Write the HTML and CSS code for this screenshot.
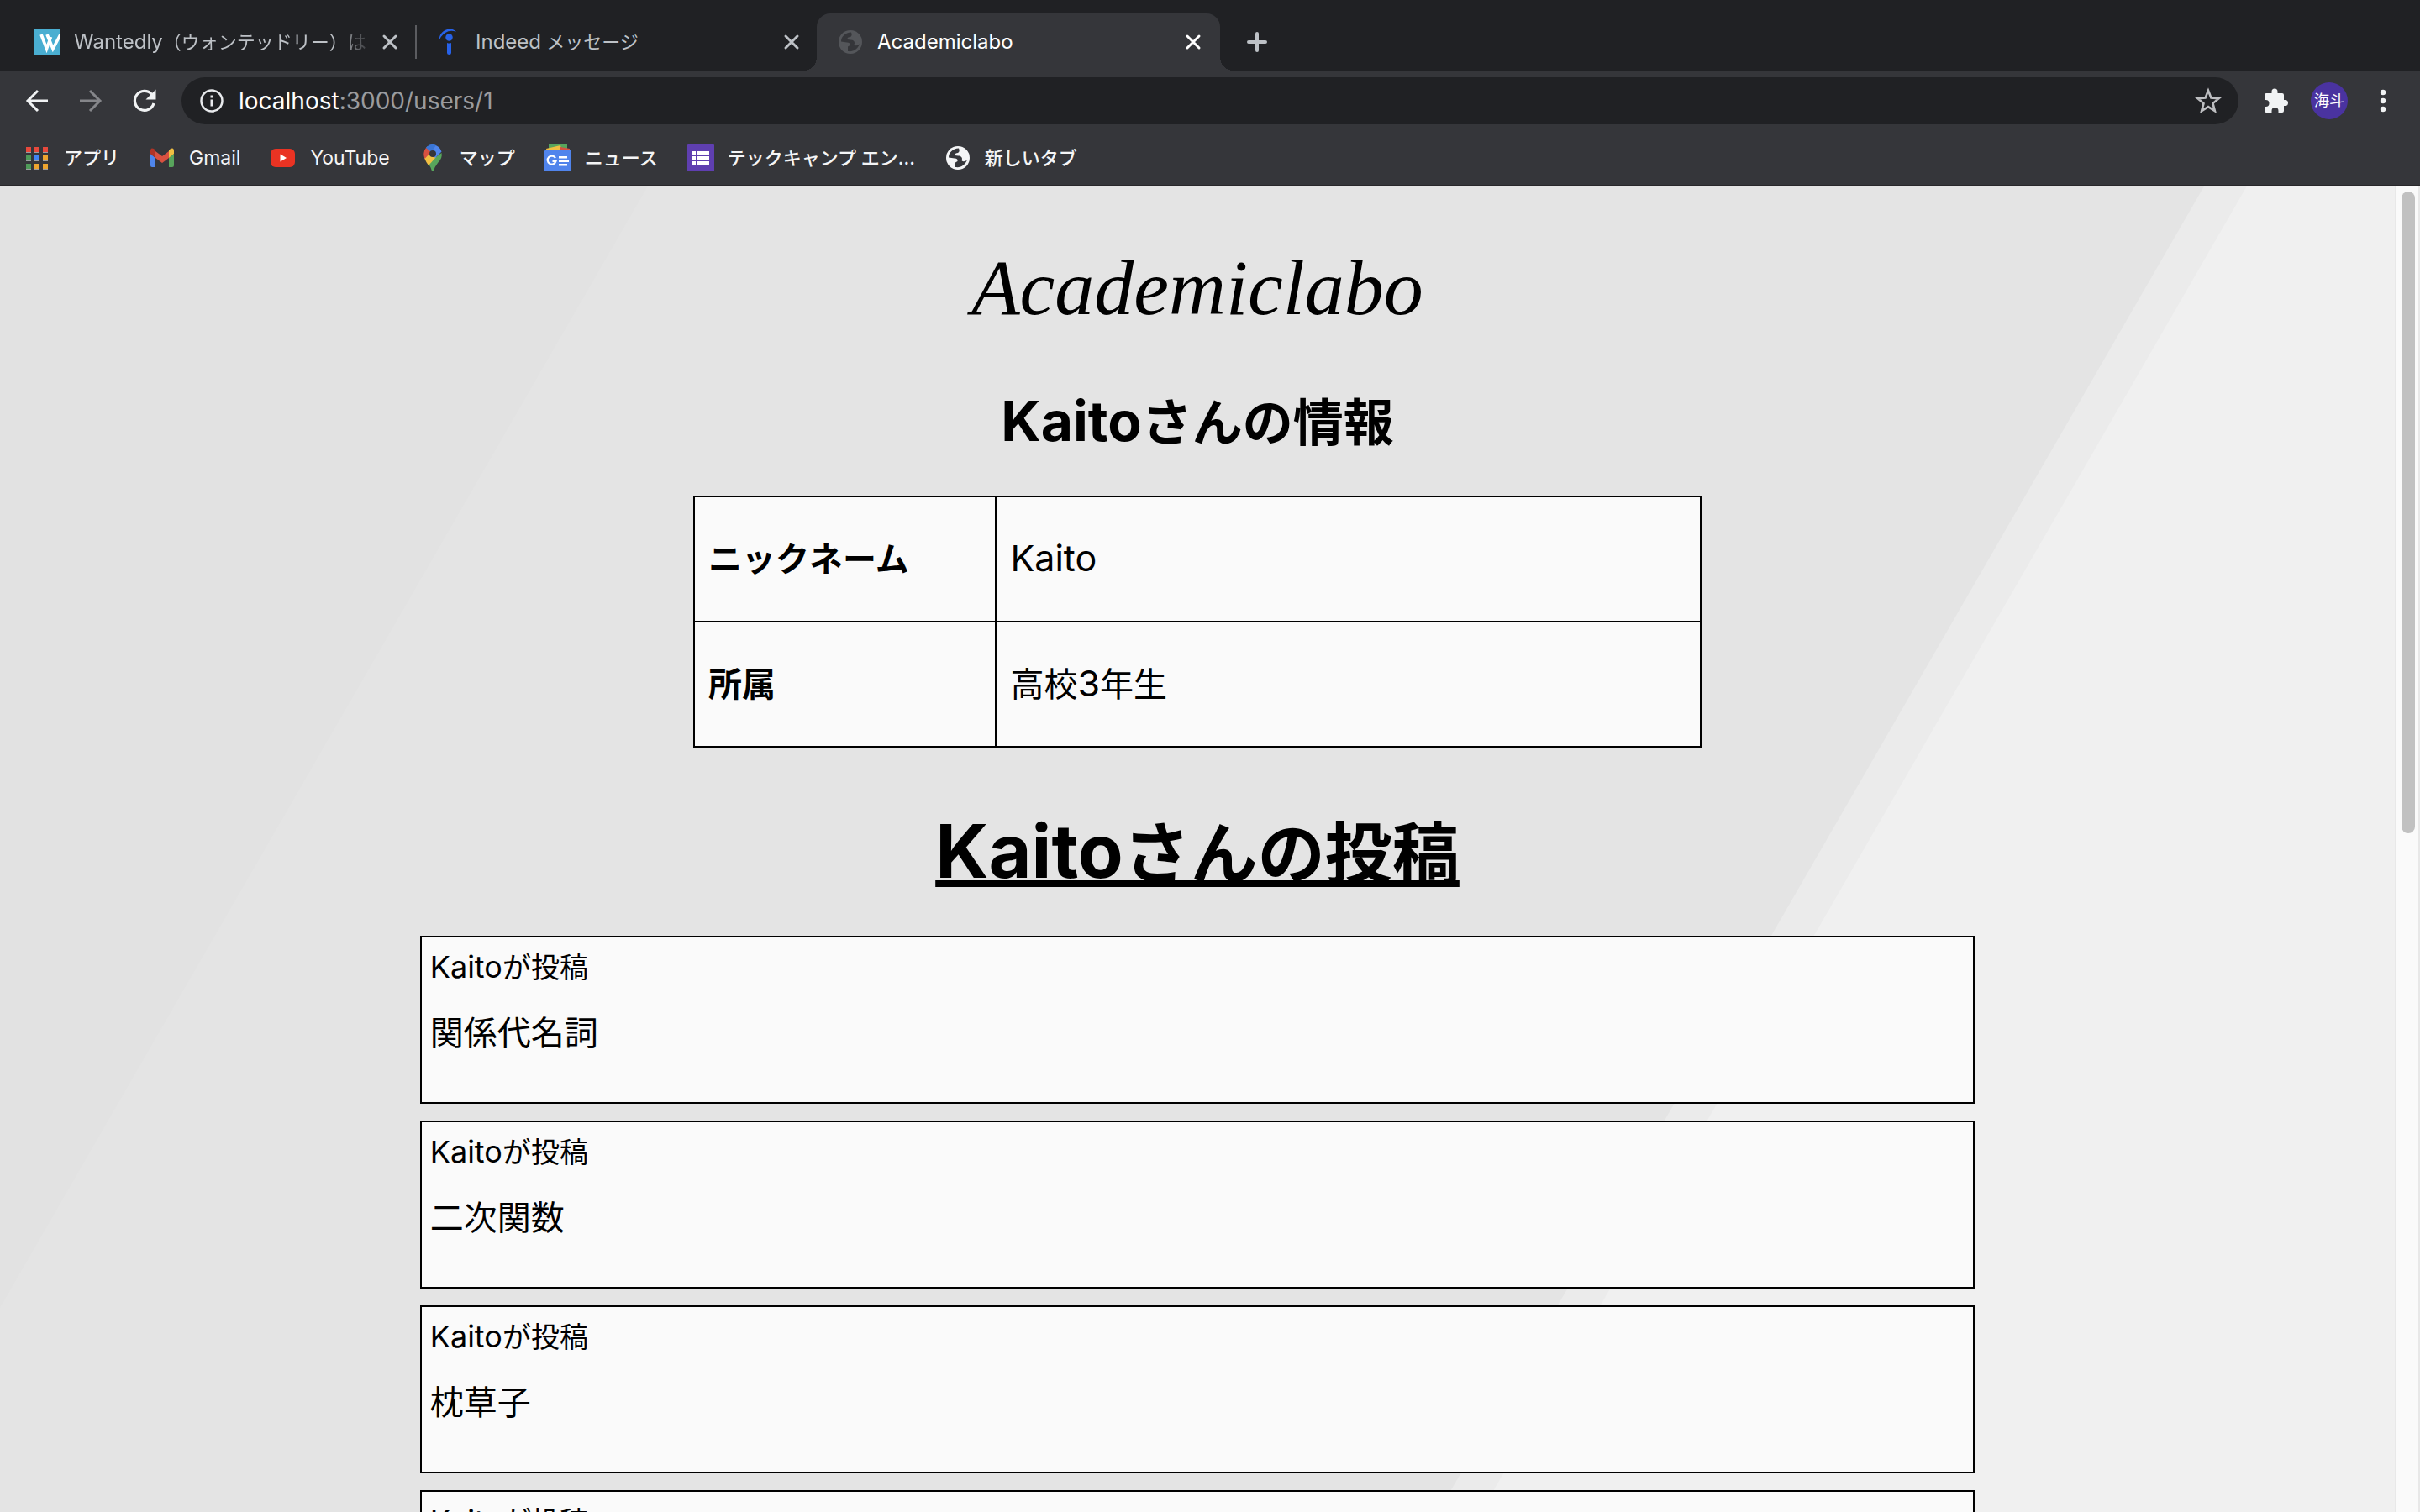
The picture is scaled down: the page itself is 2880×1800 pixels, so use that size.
FILE: index.html
```html
<!DOCTYPE html>
<html lang="ja">
<head>
<meta charset="utf-8">
<title>Academiclabo</title>
<link rel="stylesheet" href="styles.css">
</head>
<body>
<svg class="defs" aria-hidden="true">
  <symbol id="close" viewBox="0 0 32 32"><path d="M9 9l14 14M23 9L9 23" fill="none" stroke="currentColor" stroke-width="3" stroke-linecap="round"/></symbol>
  <symbol id="globe" viewBox="0 0 32 32"><circle cx="16" cy="16" r="14" fill="currentColor"/><path class="land" d="M17 4.500C10 5 5 9.500 5 15.500L12 16.500C15 16.500 16 18 15.500 20L13 21.500V27C20 28 25 24 27 18C25 20.500 22 21 20.500 19C22 16 20 13.500 16.500 13.500L12.500 13C12 11 14 10 16 10C18 9 18 7 17 4.500Z"/></symbol>
</svg>

<header class="chrome">
  <nav class="tabs" aria-label="タブ">
    <div class="tab">
      <svg class="icon" viewBox="0 0 32 32"><path fill="#4aaed1" d="M0 0h32v32H0z"/><path d="M9 7l6.500 17 5-14M16 7l7 17L32 7" fill="none" stroke="#fff" stroke-width="3.600"/></svg>
      <span class="tab-title"><span class="latin">Wantedly</span>（ウォンテッドリー）は</span>
      <button class="tab-close" aria-label="閉じる"><svg class="icon"><use href="#close"/></svg></button>
    </div>
    <div class="tab divided">
      <svg class="icon" viewBox="0 0 32 32"><circle cx="16.500" cy="10.500" r="4.200" fill="#2762e9"/><path d="M14 17q2.500 1 5 0v12q0 2-2.500 2t-2.500-2z" fill="#2762e9"/><path d="M4 16Q5 1 18 .5Q22 .5 25 4Q18 1 12 5Q6 9 4 16z" fill="#2762e9"/></svg>
      <span class="tab-title"><span class="latin">Indeed</span> メッセージ</span>
      <button class="tab-close" aria-label="閉じる"><svg class="icon"><use href="#close"/></svg></button>
    </div>
    <div class="tab active">
      <svg class="icon dim"><use href="#globe"/></svg>
      <span class="tab-title"><span class="latin">Academiclabo</span></span>
      <button class="tab-close" aria-label="閉じる"><svg class="icon"><use href="#close"/></svg></button>
    </div>
    <button class="new-tab" aria-label="新しいタブ"><svg class="icon" viewBox="0 0 32 32"><path d="M16 6v20M6 16h20" stroke="currentColor" stroke-width="4" stroke-linecap="round"/></svg></button>
  </nav>

  <div class="toolbar">
    <button class="tool" aria-label="戻る"><svg viewBox="0 0 40 40"><path d="M33 20H9M21 8L9 20l12 12" fill="none" stroke="#f1f3f4" stroke-width="3"/></svg></button>
    <button class="tool" aria-label="進む"><svg viewBox="0 0 40 40"><path d="M7 20h24M19 8l12 12-12 12" fill="none" stroke="#85868a" stroke-width="3"/></svg></button>
    <button class="tool" aria-label="再読み込み"><svg viewBox="0 0 40 40"><path d="M31 23A11.500 11.500 0 1 1 28.500 12.200" fill="none" stroke="#f1f3f4" stroke-width="3.200"/><path d="M33.500 6.500v12h-12z" fill="#f1f3f4"/></svg></button>
    <div class="omnibox">
      <svg class="icon" viewBox="0 0 32 32"><circle cx="16" cy="16" r="12.500" fill="none" stroke="#e8eaed" stroke-width="2.500"/><path d="M14.500 14.500h3v8h-3zM14.500 9.500h3v3h-3z" fill="#e8eaed"/></svg>
      <div class="url">localhost<span class="path">:3000/users/1</span></div>
      <button class="star" aria-label="ブックマーク"><svg class="icon" viewBox="0 0 32 32"><path d="M16 3.800l3.400 8.700 9.300.6-7.200 6 2.400 9-7.900-5-7.900 5 2.400-9-7.200-6 9.300-.6z" fill="none" stroke="#bdbec1" stroke-width="2.600"/></svg></button>
    </div>
    <button class="tool" aria-label="拡張機能"><svg viewBox="0 0 40 40"><path d="M9 11h6.500V9a3.500 3.500 0 0 1 7 0v2H28a2 2 0 0 1 2 2v6h1.500a3.500 3.500 0 0 1 0 7H30v6a2 2 0 0 1-2 2h-4.500v-2a4 4 0 0 0-8 0v2H9a2 2 0 0 1-2-2v-5h1.500a4 4 0 0 0 0-8H7v-6a2 2 0 0 1 2-2z" fill="#f1f3f4"/></svg></button>
    <button class="avatar" aria-label="プロフィール">海斗</button>
    <button class="tool" aria-label="メニュー"><svg viewBox="0 0 40 40" fill="#f1f3f4"><circle cx="20" cy="10" r="3.200"/><circle cx="20" cy="20" r="3.200"/><circle cx="20" cy="30" r="3.200"/></svg></button>
  </div>

  <nav class="bookmarks" aria-label="ブックマーク">
    <a href="#"><svg class="icon" viewBox="0 0 32 32"><path fill="#e8493c" d="M3 3h6v6H3zM13 3h6v6h-6zM23 3h6v6h-6z"/><path fill="#4f9a59" d="M3 13h6v6H3zM3 23h6v6H3z"/><path fill="#4285f4" d="M13 13h6v6h-6z"/><path fill="#eda52f" d="M23 13h6v6h-6zM13 23h6v6h-6zM23 23h6v6h-6z"/><path fill="#9b9da0" d="M3 9h6v1H3zM13 9h6v1h-6zM23 9h6v1h-6zM3 19h6v1H3zM13 19h6v1h-6zM23 19h6v1h-6zM3 29h6v1H3zM13 29h6v1h-6zM23 29h6v1h-6z"/></svg>アプリ</a>
    <a href="#"><svg class="icon" viewBox="0 0 32 32"><path fill="#4f86ec" d="M2 11l6 5v11H4q-2 0-2-2z"/><path fill="#58a55c" d="M24 16l6-5v14q0 2-2 2h-4z"/><path fill="#d85140" d="M8 8l8 6 8-6v8l-8 6-8-6z"/><path fill="#b13426" d="M2 8q0-5 4-3l2 2v9l-6-5z"/><path fill="#f1bf42" d="M30 8q0-5-4-3l-2 2v9l6-5z"/></svg><span class="latin">Gmail</span></a>
    <a href="#"><svg class="icon" viewBox="0 0 32 32"><rect x="1" y="5" width="29" height="22" rx="6" fill="#ea3323"/><path d="M12.500 11.500l7.500 4.500-7.500 4.500z" fill="#fff"/></svg><span class="latin">YouTube</span></a>
    <a href="#"><svg class="icon" viewBox="0 0 32 32"><path fill="#58a55c" d="M26.500 10Q28 16 22 22Q18 27 17 31.500H15Q14 27 10 22z"/><path fill="#f1bf42" d="M6 16L12.500 9.500 20 15 11 25Q8 21 6 16z"/><path fill="#4f86ec" d="M8 4Q11 0 16 0Q24 1 26.500 8.500L19 16z"/><path fill="#3a76d6" d="M8 4Q13-2 20 1L14 9z"/><path fill="#d85140" d="M8 4l6 5-7.500 8Q3.500 9 8 4z"/><circle cx="16" cy="11" r="4" fill="#35363a"/></svg>マップ</a>
    <a href="#"><svg class="icon" viewBox="0 0 32 32"><path fill="#58a55c" d="M5 0h22v8H5z"/><path fill="#f1bf42" d="M2 5l17-4 2 8H3z"/><path fill="#d85140" d="M19 3l11 2v4H19z"/><rect y="7" width="32" height="25" rx="1" fill="#5084ec"/><path d="M13 16A5 5 0 1 0 13.500 20H9.500" fill="none" stroke="#fff" stroke-width="2.200"/><path d="M17 14h10v2.500H17zM17 18.500h12V21H17zM17 23h10v2.500H17z" fill="#fff"/></svg>ニュース</a>
    <a href="#"><svg class="icon" viewBox="0 0 32 32"><rect width="32" height="32" rx="1" fill="#5f3fb0"/><path fill="#fff" d="M6 8h4v4H6zM12 8h14v4H12zM6 14h4v4H6zM12 14h14v4H12zM6 20h4v4H6zM12 20h14v4H12z"/></svg>テックキャンプ エン...</a>
    <a href="#"><svg class="icon"><use href="#globe"/></svg>新しいタブ</a>
  </nav>
</header>

<div class="viewport">
  <main class="page">
    <div class="logo">Academiclabo</div>
    <h2 class="info-title"><span class="latin">Kaito</span>さんの情報</h2>
    <table class="info">
      <tr><th scope="row">ニックネーム</th><td><span class="latin">Kaito</span></td></tr>
      <tr><th scope="row">所属</th><td>高校<span class="latin">3</span>年生</td></tr>
    </table>
    <h1 class="posts-title"><span class="latin">Kaito</span>さんの投稿</h1>
    <section class="posts">
      <article class="post"><p class="by"><span class="latin">Kaito</span>が投稿</p><p class="subject">関係代名詞</p></article>
      <article class="post"><p class="by"><span class="latin">Kaito</span>が投稿</p><p class="subject">二次関数</p></article>
      <article class="post"><p class="by"><span class="latin">Kaito</span>が投稿</p><p class="subject">枕草子</p></article>
      <article class="post"><p class="by"><span class="latin">Kaito</span>が投稿</p></article>
    </section>
  </main>
  <div class="scrollbar"><div class="thumb"></div></div>
</div>
</body>
</html>
```
FILE: styles.css
```css
* { box-sizing: border-box; }

body {
  margin: 0;
  height: 100vh;
  overflow: hidden;
  display: flex;
  flex-direction: column;
  font-family: Inter, "Noto Sans CJK JP", sans-serif;
  color: #000;
}

button {
  display: grid;
  place-items: center;
  padding: 0;
  border: 0;
  background: none;
  color: inherit;
  font: inherit;
}

.defs { position: absolute; width: 0; height: 0; }
.icon { display: block; flex: none; width: 32px; height: 32px; }
.land { fill: #35363a; }

/* Latin letters are set a little larger than the kana and kanji beside them */
.latin { line-height: 1; }
.tabs .latin { font-size: 24px; }
.bookmarks .latin { font-size: 23px; }
.info-title .latin { font-size: 66px; }
.info .latin { font-size: 43px; }
.posts-title .latin { font-size: 88px; }
.by .latin { font-size: 36px; }

/* Browser frame */
.chrome {
  flex: none;
  background: #35363a;
  border-bottom: 2px solid #28272a;
  font-size: 22px;
  line-height: 32px;
}

.tabs {
  display: flex;
  align-items: flex-end;
  height: 84px;
  padding-left: 16px;
  background: #202124;
}
.tab {
  display: flex;
  align-items: center;
  gap: 16px;
  width: 478px;
  height: 68px;
  padding: 0 14px 0 24px;
  color: #bdc1c6;
}
.tab-title {
  flex: 1;
  overflow: hidden;
  white-space: nowrap;
}
.tab-close { margin-left: -12px; }
.tab:first-child .tab-title {
  -webkit-mask-image: linear-gradient(90deg, #000 88%, transparent);
  mask-image: linear-gradient(90deg, #000 88%, transparent);
}
.divided {
  background: linear-gradient(#5b5c60, #5b5c60) 0 50% / 2px 40px no-repeat;
}
.active {
  position: relative;
  width: 480px;
  padding-right: 16px;
  border-radius: 16px 16px 0 0;
  background: #35363a;
  color: #fff;
}
.active::before,
.active::after {
  content: "";
  position: absolute;
  bottom: 0;
  width: 16px;
  height: 16px;
}
.active::before { right: 100%; background: radial-gradient(circle at 0 0, transparent 16px, #35363a 16px); }
.active::after { left: 100%; background: radial-gradient(circle at 100% 0, transparent 16px, #35363a 16px); }
.dim { color: #54565a; }
.new-tab {
  width: 32px;
  height: 68px;
  margin-left: 28px;
  color: #bdc1c6;
}

.toolbar {
  display: flex;
  align-items: center;
  gap: 24px;
  height: 72px;
  padding: 0 24px;
}
.tool { width: 40px; height: 40px; }
.tool svg { width: 40px; height: 40px; }
.omnibox {
  flex: 1;
  display: flex;
  align-items: center;
  gap: 16px;
  height: 56px;
  padding: 0 20px;
  border-radius: 28px;
  background: #202124;
  color: #fff;
  font-size: 28px;
}
.url { flex: 1; }
.path { color: #9a9b9e; }
.avatar {
  width: 44px;
  height: 44px;
  margin: 0 -2px;
  border-radius: 50%;
  background: #4a33a0;
  color: #fff;
  font-size: 18px;
}

.bookmarks {
  display: flex;
  align-items: center;
  gap: 35px;
  height: 64px;
  padding-left: 28px;
}
.bookmarks a {
  display: flex;
  align-items: center;
  gap: 16px;
  color: #f4f5f6;
  font-weight: 500;
  text-decoration: none;
  white-space: nowrap;
}
.bookmarks .latin { font-weight: 400; }

/* Page */
.viewport {
  flex: 1;
  min-height: 0;
  display: flex;
}
.page {
  flex: 1;
  display: flex;
  flex-direction: column;
  align-items: center;
  overflow: hidden;
  background: linear-gradient(120deg, #e2e2e2 667px, #e4e4e4 668px, #e4e4e4 2271px, #ebebeb 2272px, #ebebeb 2315px, #f0f0f0 2316px);
}
.page > * { flex: none; }

.logo {
  margin-top: 50px;
  font: 94px/140px "Apple Chancery", "Liberation Serif", serif;
  font-style: italic;
}
.info-title {
  margin: 46px 0 42px;
  font-size: 60px;
  line-height: 90px;
}

.info {
  width: 1200px;
  border-collapse: collapse;
  background: #fafafa;
  font-size: 40px;
  line-height: 60px;
  text-align: left;
}
.info th,
.info td {
  height: 149px;
  padding: 0 16px;
  border: 2px solid #000;
}
.info th { width: 30%; }

.posts-title {
  margin: 66px 0 38px;
  font-size: 80px;
  line-height: 120px;
  text-decoration: underline 8px;
  text-underline-offset: 3px;
  text-decoration-skip-ink: none;
}
.posts {
  display: flex;
  flex-direction: column;
  gap: 20px;
  width: calc(65% - 2px);
}
.post {
  min-height: 200px;
  padding: 12px 10px;
  border: 2px solid #000;
  background: #fafafa;
}
.by {
  margin: 0 0 24px;
  font-size: 34px;
  line-height: 48px;
}
.subject {
  margin: 0;
  font-size: 40px;
  line-height: 60px;
}

.scrollbar {
  flex: none;
  width: 30px;
  padding: 6px 4px 6px 6px;
  border: solid #e8e8e8;
  border-width: 0 2px;
  background: #fafafa;
}
.thumb {
  width: 16px;
  height: 764px;
  max-height: 100%;
  border-radius: 8px;
  background: #c1c1c1;
}
```
